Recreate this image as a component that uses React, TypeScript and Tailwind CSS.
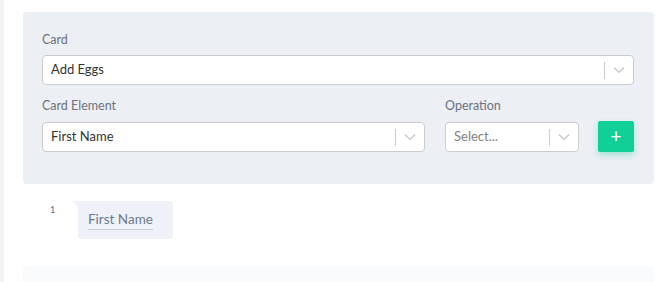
import React from 'react';

const Chevron: React.FC = () => (
  <svg width="12" height="8" viewBox="0 0 12 8" fill="none">
    <path d="M1 1.5l5 5 5-5" stroke="#c4c4c4" strokeWidth="1.2" />
  </svg>
);

const SelectBox: React.FC<{ value: string; placeholder?: boolean; className?: string }> = ({
  value,
  placeholder,
  className,
}) => (
  <div
    className={`flex h-[30px] items-center rounded-[4px] border border-[#cccccc] bg-white ${className ?? ''}`}
  >
    <span
      className={`flex-1 truncate pl-[8px] text-[13px] ${placeholder ? 'text-[#808080]' : 'text-[#333333]'}`}
    >
      {value}
    </span>
    <span className="h-[17px] w-px bg-[#cccccc]" />
    <span className="flex w-[28px] items-center justify-center">
      <Chevron />
    </span>
  </div>
);

export default function App() {
  return (
    <div className="flex h-[282px] w-[665px] overflow-hidden bg-white" style={{ fontFamily: 'Lato, "Open Sans", sans-serif' }}>
      <div className="w-[4px] shrink-0 bg-[#f3f3f4]" />
      <div className="flex-1 pl-[19px] pr-[11px] pt-[12px]">
        {/* Form panel */}
        <div className="h-[172px] rounded-[4px] bg-[#eceff4] pl-[19px] pr-[20px] pt-[19px]">
          <label className="block text-[12.5px] leading-[18px] text-[#6b7280]">Card</label>
          <SelectBox value="Add Eggs" className="mt-[6px]" />

          <div className="mt-[12px] flex items-end">
            <div className="w-[383px]">
              <label className="block text-[12.5px] leading-[18px] text-[#6b7280]">Card Element</label>
              <SelectBox value="First Name" className="mt-[7px]" />
            </div>
            <div className="ml-[20px] w-[134px]">
              <label className="block text-[12.5px] leading-[18px] text-[#6b7280]">Operation</label>
              <SelectBox value="Select..." placeholder className="mt-[7px]" />
            </div>
            <button className="ml-[19px] flex h-[31px] w-[36px] items-center justify-center rounded-[2px] bg-[#10cf97] pb-[1px] text-[19px] font-normal text-white shadow-[0_3px_6px_rgba(16,207,151,0.35)]">
              +
            </button>
          </div>
        </div>

        {/* Sequence */}
        <div className="mt-[17px] flex items-start">
          <span className="ml-[27px] mt-[3px] w-[28px] text-[9px] leading-[12px] text-[#5a6a85]">1</span>
          <div className="relative rounded-r-[3px] rounded-bl-[3px] bg-[#eef1f8] pb-[9px] pl-[10px] pr-[20px] pt-[10px]">
            <span className="absolute left-[-6px] top-0 h-0 w-0 border-l-[6px] border-t-[6px] border-l-transparent border-t-[#eef1f8]" />
            <span className="block border-b border-[#c9cdd6] pb-[1px] text-[13.5px] leading-[17px] text-[#6d7a8e]">
              First Name
            </span>
          </div>
        </div>

        <div className="mt-[27px] h-[40px] rounded-[4px] bg-[#f9fafc]" />
      </div>
    </div>
  );
}
